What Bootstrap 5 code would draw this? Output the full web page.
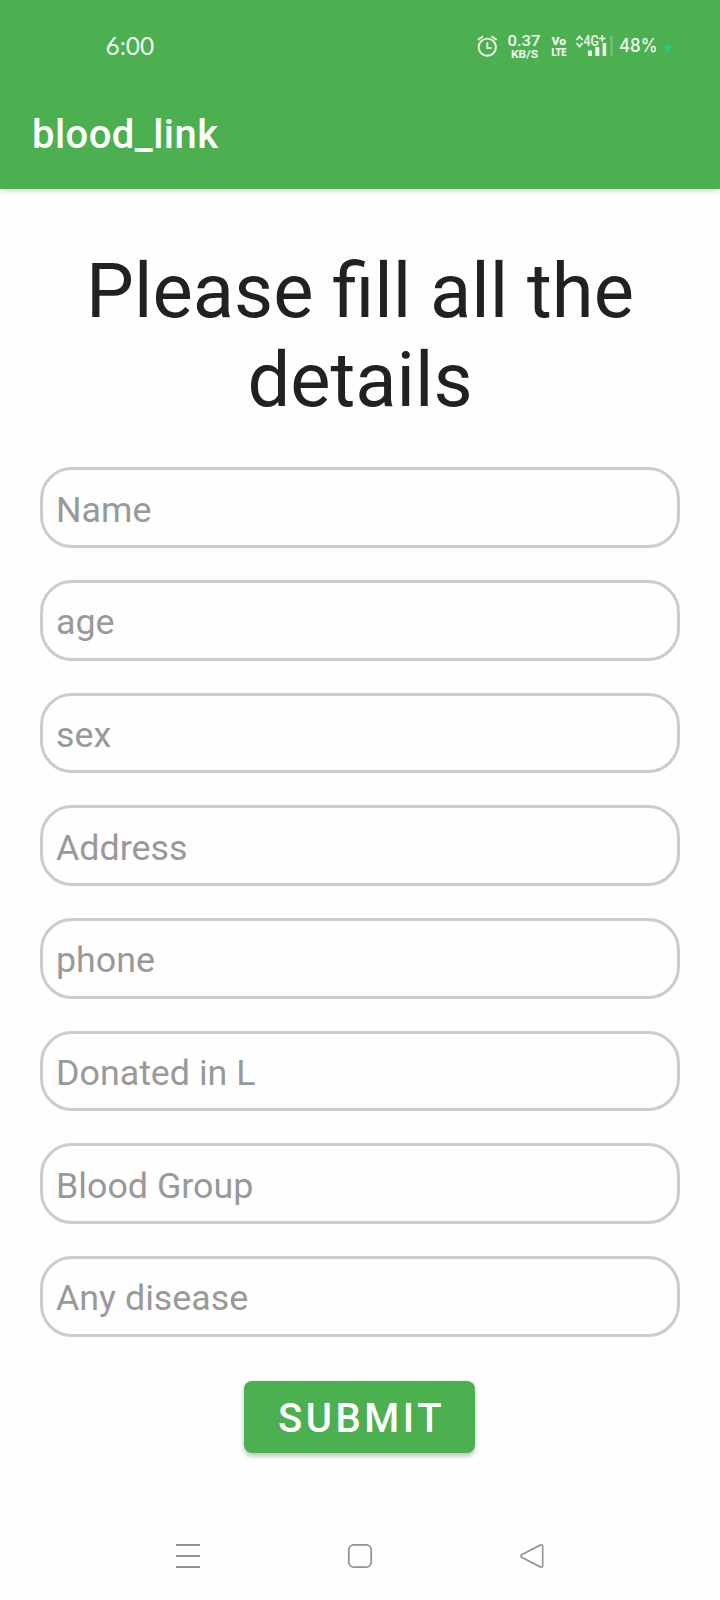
<!DOCTYPE html>
<html lang="en">
<head>
<meta charset="utf-8">
<meta name="viewport" content="width=device-width, initial-scale=1">
<title>blood_link</title>
<link href="https://cdn.jsdelivr.net/npm/bootstrap@5.3.0/dist/css/bootstrap.min.css" rel="stylesheet">
<style>
  :root { --brand: #4caf50; }
  body { font-family: Roboto, "Liberation Sans", sans-serif; height: 1600px; overflow: hidden; background: #fefefe; }
  .app-top { background: var(--brand); height: 188.5px; box-shadow: 0 1px 6px rgba(0,0,0,.22); }
  .status-row { height: 92px; padding: 0 46px 0 105.5px; color: #f0faf0; }
  .clock { font-size: 24.5px; line-height: 28px; font-family: Lato, sans-serif; }
  .app-title { font-size: 40px; font-weight: 500; line-height: 48px; padding-left: 32px; margin-top: 19px; letter-spacing: .45px; }
  .headline { font-size: 75.9px; line-height: 89px; color: #212121; margin: 58.5px 0 42.3px; font-weight: 400; }
  .fields { padding: 0 40px; gap: 32px; }
  .field { height: 80.67px; border: 3px solid #ccc; border-radius: 32px; font-size: 35.8px; line-height: 42px; padding: 4px 13px 0; background: transparent; }
  .field::placeholder { color: #999; opacity: 1; }
  .send { width: 231px; height: 72px; margin: 44px 0 0 244px; padding: 5px 0 0 4px; border: 0; border-radius: 8px; background: var(--brand); font-size: 40px; line-height: 1; font-weight: 500; letter-spacing: 3.57px; box-shadow: 0 3px 5px rgba(0,0,0,.25); }
  .sys-nav { height: 90px; padding: 0 176px; }
</style>
</head>
<body class="d-flex flex-column">
<header class="app-top flex-shrink-0">
  <div class="status-row d-flex align-items-center justify-content-between">
    <span class="clock">6:00</span>
    <svg width="200" height="28" viewBox="474 32 200 28" fill="currentColor" font-family="Roboto, sans-serif">
      <g fill="none" stroke="currentColor" stroke-width="1.900" stroke-linecap="round">
        <circle cx="487.300" cy="47.200" r="8.600"/>
        <path d="M487.300 43v5h3.500M478.500 39.500l3.800-2.800M496 39.500l-3.800-2.800"/>
      </g>
      <text x="507.500" y="45.600" font-size="15.500" font-weight="500" textLength="33" lengthAdjust="spacingAndGlyphs">0.37</text>
      <text x="511" y="58" font-size="11.400" font-weight="700" textLength="27" lengthAdjust="spacingAndGlyphs">KB/S</text>
      <text x="551.500" y="45" font-size="11.800" font-weight="900" textLength="14.500" lengthAdjust="spacingAndGlyphs">Vo</text>
      <text x="551.500" y="56.300" font-size="11.800" font-weight="900" textLength="15" lengthAdjust="spacingAndGlyphs">LTE</text>
      <path d="M576.500 40l3-3.500 3 3.500M576.500 43l3 3.500 3-3.500" fill="none" stroke="currentColor" stroke-width="1.800"/>
      <text x="583.500" y="46" font-size="14" font-weight="500" textLength="15.500" lengthAdjust="spacingAndGlyphs">4G</text>
      <path d="M599 38.500h6.500M602.200 35.200v6.500" stroke="currentColor" stroke-width="1.600"/>
      <path d="M588 50.500h4v5.500h-4zM595.300 47h4v9h-4zM602.600 43h3.600v13h-3.600z"/>
      <path d="M610 36h3v20h-3z" opacity=".2"/>
      <text x="619" y="52" font-family="Inter" font-size="18.200" font-weight="500" textLength="38.500" lengthAdjust="spacingAndGlyphs">48%</text>
      <path d="M671 44l-8.500 3v1.800h4l-1.500 7.200 6-8z" fill="#22cf80" opacity=".8"/>
    </svg>
  </div>
  <h1 class="app-title text-white mb-0">blood_link</h1>
</header>
<main class="flex-grow-1">
  <h2 class="headline text-center">Please fill all the<br>details</h2>
  <form class="d-flex flex-column align-items-start">
    <div class="fields d-flex flex-column w-100">
      <input class="field w-100" type="text" placeholder="Name">
      <input class="field w-100" type="text" placeholder="age">
      <input class="field w-100" type="text" placeholder="sex">
      <input class="field w-100" type="text" placeholder="Address">
      <input class="field w-100" type="text" placeholder="phone">
      <input class="field w-100" type="text" placeholder="Donated in L">
      <input class="field w-100" type="text" placeholder="Blood Group">
      <input class="field w-100" type="text" placeholder="Any disease">
    </div>
    <button class="send btn btn-success" type="button">SUBMIT</button>
  </form>
</main>
<nav class="sys-nav d-flex justify-content-between flex-shrink-0">
  <svg width="24" height="26" viewBox="0 0 24 26" stroke="#909090" stroke-width="2" style="margin-top:33px"><path d="M0 2h24M0 13h24M0 24h24"/></svg>
  <svg width="26" height="26" viewBox="0 0 26 26" fill="none" stroke="#909090" stroke-width="1.700" style="margin-top:33px"><rect x="1.800" y="1.800" width="22.400" height="22.400" rx="5"/></svg>
  <svg width="24" height="26" viewBox="0 0 24 26" fill="none" stroke="#909090" stroke-width="1.600" stroke-linejoin="round" style="margin-top:33px"><path d="M20.500 2L2 11.500q-2 1.500 0 3L20.500 24q2.200.500 2.200-1.500v-19q0-2-2.200-1.500z"/></svg>
</nav>
<script src="https://cdn.jsdelivr.net/npm/bootstrap@5.3.0/dist/js/bootstrap.bundle.min.js"></script>
</body>
</html>
